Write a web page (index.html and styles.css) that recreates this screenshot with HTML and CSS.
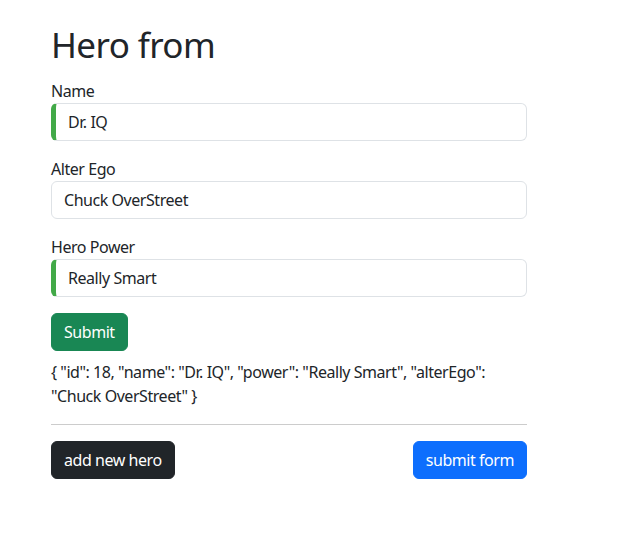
FILE: index.html
```html
<!DOCTYPE html>
<html lang="en">
<head>
<meta charset="utf-8">
<title>Hero form</title>
<link rel="stylesheet" href="styles.css">
</head>
<body>
<div class="container">
  <h1 class="title">Hero from</h1>
  <form class="hero-form">
    <div class="field">
      <label class="label" for="name">Name</label>
      <input class="input valid" id="name" type="text" value="Dr. IQ">
    </div>
    <div class="field">
      <label class="label" for="alterEgo">Alter Ego</label>
      <input class="input" id="alterEgo" type="text" value="Chuck OverStreet">
    </div>
    <div class="field">
      <label class="label" for="power">Hero Power</label>
      <input class="input valid" id="power" type="text" value="Really Smart">
    </div>
    <button class="btn btn-success" type="button">Submit</button>
  </form>
  <p class="json">{ "id": 18, "name": "Dr. IQ", "power": "Really Smart", "alterEgo": "Chuck OverStreet" }</p>
  <hr class="divider">
  <div class="actions">
    <button class="btn btn-dark" type="button">add new hero</button>
    <button class="btn btn-primary" type="button">submit form</button>
  </div>
</div>
</body>
</html>
```
FILE: styles.css
```css
* { box-sizing: border-box; }
body {
  margin: 0;
  background: #fff;
  color: #212529;
  font-family: "Noto Sans", sans-serif;
  font-size: 16px;
  letter-spacing: -0.45px;
  line-height: 1.5;
}
.container {
  width: 476px;
  margin-left: 51px;
  padding-top: 21px;
}
.title {
  margin: 0 0 10px;
  font-size: 35px;
  font-weight: 400;
  line-height: 48px;
  letter-spacing: -0.6px;
}
.field { margin-bottom: 16px; }
.label { display: block; line-height: 24px; }
.input {
  display: block;
  width: 100%;
  height: 38px;
  padding: 6px 12px;
  font: inherit;
  letter-spacing: inherit;
  color: #212529;
  background: #fff;
  border: 1px solid #dee2e6;
  border-radius: 6px;
}
.input.valid { border-left: 5px solid #42a948; }
.btn {
  display: inline-block;
  height: 38px;
  padding: 6px 12px;
  font: inherit;
  letter-spacing: inherit;
  line-height: 24px;
  color: #fff;
  border: 1px solid transparent;
  border-radius: 6px;
  cursor: pointer;
}
.btn-success { background: #198754; border-color: #198754; }
.btn-dark { background: #212529; border-color: #212529; }
.btn-primary { background: #0d6efd; border-color: #0d6efd; }
.json { margin: 9px 0 0; }
.divider {
  margin: 16px 0;
  border: 0;
  border-top: 1px solid #ccc;
}
.actions {
  display: flex;
  justify-content: space-between;
}
```
